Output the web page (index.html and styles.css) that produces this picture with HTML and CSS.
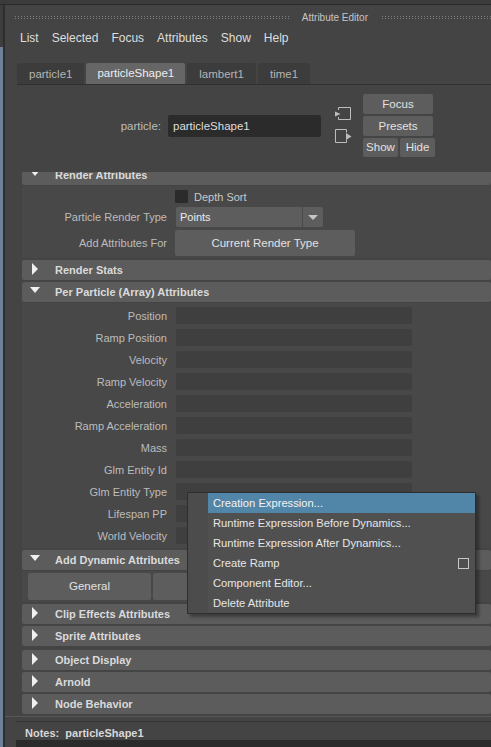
FILE: index.html
```html
<!DOCTYPE html>
<html lang="en">
<head>
    <meta charset="UTF-8">
    <title>Attribute Editor</title>
    <link rel="stylesheet" href="styles.css">
</head>
<body>
    <div class="topbar"></div>
    <div class="window">
        <div class="viewport-edge"></div>
        <div class="editor">
            <div class="titlebar">
                <span class="grip grip-left"></span>
                <span class="title">Attribute Editor</span>
                <span class="grip grip-right"></span>
            </div>
            <div class="menubar">
                <span>List</span>
                <span>Selected</span>
                <span>Focus</span>
                <span>Attributes</span>
                <span>Show</span>
                <span>Help</span>
            </div>
            <div class="tabs">
                <div class="tab">particle1</div>
                <div class="tab active">particleShape1</div>
                <div class="tab">lambert1</div>
                <div class="tab">time1</div>
            </div>

            <div class="node">
                <div class="node-label">particle:</div>
                <div class="node-field">particleShape1</div>
                <div class="node-icons">
                    <svg width="17" height="14" viewBox="0 0 17 14">
                        <path d="M3.5 3V0.5H15.5V12.5H3.5V10" fill="none" stroke="#bdbdbd"/>
                        <path d="M0 4.5L5.5 7L0 9.5Z" fill="#bdbdbd"/>
                    </svg>
                    <svg width="17" height="14" viewBox="0 0 17 14">
                        <path d="M11.5 3.5V0.5H0.5V13.5H11.5V10.5" fill="none" stroke="#bdbdbd"/>
                        <path d="M11 4L16.5 7.5L11 11Z" fill="#bdbdbd"/>
                    </svg>
                </div>
                <div class="node-buttons">
                    <div class="btn wide">Focus</div>
                    <div class="btn wide">Presets</div>
                    <div class="btn-pair">
                        <div class="btn half">Show</div>
                        <div class="btn half">Hide</div>
                    </div>
                </div>
            </div>

            <div class="scroll">
                <div class="scroll-inner">
                    <div class="section-head open"><span class="arrow down"></span>Render Attributes</div>
                    <div class="section-body render-body">
                        <div class="row check-row">
                            <span class="label"></span>
                            <span class="checkbox"></span>
                            <span class="check-text">Depth Sort</span>
                        </div>
                        <div class="row select-row">
                            <span class="label">Particle Render Type</span>
                            <div class="select">
                                <span class="select-value">Points</span>
                                <span class="select-arrow"><span class="caret"></span></span>
                            </div>
                        </div>
                        <div class="row button-row">
                            <span class="label">Add Attributes For</span>
                            <div class="btn render-type">Current Render Type</div>
                        </div>
                    </div>

                    <div class="section-head"><span class="arrow right"></span>Render Stats</div>

                    <div class="section-head open"><span class="arrow down"></span>Per Particle (Array) Attributes</div>
                    <div class="section-body array-body">
                        <div class="row array-row"><span class="label">Position</span><span class="array-field"></span></div>
                        <div class="row array-row"><span class="label">Ramp Position</span><span class="array-field"></span></div>
                        <div class="row array-row"><span class="label">Velocity</span><span class="array-field"></span></div>
                        <div class="row array-row"><span class="label">Ramp Velocity</span><span class="array-field"></span></div>
                        <div class="row array-row"><span class="label">Acceleration</span><span class="array-field"></span></div>
                        <div class="row array-row"><span class="label">Ramp Acceleration</span><span class="array-field"></span></div>
                        <div class="row array-row"><span class="label">Mass</span><span class="array-field"></span></div>
                        <div class="row array-row"><span class="label">Glm Entity Id</span><span class="array-field"></span></div>
                        <div class="row array-row"><span class="label">Glm Entity Type</span><span class="array-field"></span></div>
                        <div class="row array-row"><span class="label">Lifespan PP</span><span class="array-field"></span></div>
                        <div class="row array-row"><span class="label">World Velocity</span><span class="array-field"></span></div>
                    </div>

                    <div class="section-head open"><span class="arrow down"></span>Add Dynamic Attributes</div>
                    <div class="section-body dynamic-body">
                        <div class="btn dyn">General</div>
                        <div class="btn dyn"></div>
                        <div class="btn dyn"></div>
                    </div>

                    <div class="section-head"><span class="arrow right"></span>Clip Effects Attributes</div>
                    <div class="section-head spaced"><span class="arrow right"></span>Sprite Attributes</div>
                    <div class="section-head"><span class="arrow right"></span>Object Display</div>
                    <div class="section-head"><span class="arrow right"></span>Arnold</div>
                    <div class="section-head"><span class="arrow right"></span>Node Behavior</div>
                </div>
            </div>

            <div class="notes">
                <div class="notes-label">Notes:&nbsp; particleShape1</div>
                <div class="notes-field"></div>
            </div>
        </div>
    </div>

    <div class="popup">
        <div class="popup-item hover">Creation Expression...</div>
        <div class="popup-item">Runtime Expression Before Dynamics...</div>
        <div class="popup-item">Runtime Expression After Dynamics...</div>
        <div class="popup-item option">Create Ramp<span class="option-box"></span></div>
        <div class="popup-item">Component Editor...</div>
        <div class="popup-item">Delete Attribute</div>
    </div>
</body>
</html>
```

FILE: styles.css
```css
body {
    margin: 0;
    width: 491px;
    height: 747px;
    overflow: hidden;
    position: relative;
    background: #444;
    font-family: "Liberation Sans", Arial, sans-serif;
    font-size: 11px;
    color: #bdbdbd;
}
.topbar {
    height: 4px;
    background: #3b3b3b;
    border-bottom: 1px solid #2a2a2a;
}
.window {
    display: flex;
    height: 742px;
}
.viewport-edge {
    width: 3px;
    border-right: 2px solid #2e2e2e;
    background: linear-gradient(#3d3d3d 0 42px, #6e8197 42px);
}
.editor {
    flex: 1;
    display: flex;
    flex-direction: column;
    min-width: 0;
}
.editor > * {
    flex-shrink: 0;
}

/* title + menu */
.titlebar {
    height: 25px;
    display: flex;
    align-items: center;
    padding-left: 10px;
}
.grip {
    height: 3px;
    background:
        linear-gradient(transparent 0 1px, #444 1px 2px, transparent 2px),
        repeating-linear-gradient(90deg, #7c7c7c 0 1px, transparent 1px 3px);
}
.grip-left {
    flex: 1;
}
.grip-right {
    width: 109px;
}
.title {
    font-size: 10px;
    color: #c4c4c4;
    margin: 0 14px 0 13px;
}
.menubar {
    height: 16px;
    line-height: 16px;
    display: flex;
    gap: 13px;
    padding-left: 15px;
    margin-bottom: 17px;
    font-size: 12px;
    color: #dedede;
}

/* tabs */
.tabs {
    display: flex;
    gap: 2px;
    height: 21px;
    margin-left: 12px;
    border-bottom: 1px solid #303030;
}
.tab {
    padding: 0 12px;
    line-height: 23px;
    font-size: 11.5px;
    background: #3c3c3c;
    color: #b4b4b4;
    border-radius: 2px 2px 0 0;
}
.tab.active {
    padding: 0 11px;
    background: #666;
    color: #eee;
    line-height: 20px;
}

/* node name area */
.node {
    display: flex;
    align-items: flex-start;
    height: 87px;
    box-sizing: border-box;
    padding-top: 9px;
}
.node-label {
    width: 156px;
    margin-top: 21px;
    line-height: 22px;
    text-align: right;
    font-size: 11.5px;
}
.node-field {
    width: 153px;
    height: 22px;
    box-sizing: border-box;
    margin: 21px 0 0 7px;
    padding-left: 5px;
    line-height: 22px;
    font-size: 11.5px;
    background: #2b2b2b;
    color: #dedede;
    border-radius: 2px;
}
.node-icons {
    display: flex;
    flex-direction: column;
    gap: 8px;
    margin: 13px 0 0 14px;
}
.node-icons svg {
    display: block;
}
.node-buttons {
    display: flex;
    flex-direction: column;
    gap: 2px;
    margin-left: 11px;
}
.btn {
    background: #5d5d5d;
    color: #e2e2e2;
    font-size: 11.5px;
    text-align: center;
    border-radius: 2px;
}
.btn.wide {
    width: 70px;
    height: 20px;
    line-height: 20px;
}
.btn-pair {
    display: flex;
    gap: 2px;
}
.btn.half {
    width: 35px;
    height: 19px;
    line-height: 19px;
}

/* scrolling attribute sections */
.scroll {
    height: 544px;
    overflow: hidden;
    padding-left: 17px;
    border-bottom: 1px solid #575757;
}
.scroll-inner {
    margin-top: -7px;
}
.section-head {
    height: 20px;
    display: flex;
    align-items: center;
    background: #5c5c5c;
    border-radius: 2px;
    font-weight: bold;
    color: #dadada;
    margin-bottom: 2px;
}
.section-head.open {
    margin-bottom: 1px;
}
.section-head.spaced {
    margin-bottom: 4px;
}
.arrow {
    width: 0;
    height: 0;
    margin-right: 15px;
}
.arrow.down {
    margin-left: 8px;
    margin-top: -4px;
    border-left: 5px solid transparent;
    border-right: 5px solid transparent;
    border-top: 6px solid #f0f0f0;
}
.arrow.right {
    margin-left: 10px;
    margin-right: 17px;
    margin-top: -3px;
    border-top: 6px solid transparent;
    border-bottom: 6px solid transparent;
    border-left: 6px solid #f0f0f0;
}
.section-body {
    background: #484848;
    margin-bottom: 2px;
}
.row {
    display: flex;
    align-items: center;
}
.label {
    width: 145px;
    flex-shrink: 0;
    text-align: right;
    color: #bcbcbc;
}
.render-body {
    padding: 4px 0 2px;
}
.check-row {
    height: 13px;
    margin-bottom: 4px;
}
.checkbox {
    width: 13px;
    height: 13px;
    margin-left: 8px;
    background: #2b2b2b;
    border-radius: 1px;
}
.check-text {
    margin-left: 6px;
    color: #c8c8c8;
}
.select-row {
    height: 20px;
    margin-bottom: 3px;
}
.select {
    display: flex;
    width: 147px;
    height: 20px;
    margin-left: 9px;
    background: #5d5d5d;
    border-radius: 2px;
}
.select-value {
    flex: 1;
    padding-left: 4px;
    line-height: 20px;
    color: #ececec;
}
.select-arrow {
    width: 20px;
    border-left: 1px solid #4a4a4a;
    display: flex;
    align-items: center;
    justify-content: center;
}
.caret {
    border-left: 5px solid transparent;
    border-right: 5px solid transparent;
    border-top: 5px solid #c4c4c4;
}
.button-row {
    height: 26px;
}
.btn.render-type {
    width: 180px;
    height: 26px;
    line-height: 26px;
    margin-left: 8px;
}
.array-body {
    padding: 4px 0;
    display: flex;
    flex-direction: column;
    gap: 5px;
}
.array-row {
    height: 17px;
}
.array-field {
    width: 236px;
    height: 17px;
    margin-left: 9px;
    background: #3f3f3f;
    border-radius: 2px;
}
.dynamic-body {
    display: flex;
    gap: 2px;
    padding: 2px 0 2px 6px;
}
.btn.dyn {
    width: 123px;
    height: 27px;
    line-height: 27px;
}

/* notes */
.notes {
    margin: 4px 0 0 11px;
    border-top: 1px solid #353535;
}
.notes-label {
    padding: 4px 0 0 9px;
    line-height: 14px;
    font-weight: bold;
    color: #d8d8d8;
}
.notes-field {
    height: 10px;
    background: #2b2b2b;
}

/* context menu */
.popup {
    position: absolute;
    left: 187px;
    top: 492px;
    width: 289px;
    box-sizing: border-box;
    border: 1px solid #2e2e2e;
    background: #4c4c4c;
    box-shadow: 3px 3px 3px rgba(0, 0, 0, 0.35);
}
.popup-item {
    margin-left: 20px;
    height: 20px;
    line-height: 20px;
    padding-left: 5px;
    background: #505050;
    color: #e6e6e6;
    font-size: 11.2px;
}
.popup-item.hover {
    background: #5286a8;
    color: #f2f2f2;
}
.popup-item.option {
    display: flex;
    align-items: center;
    justify-content: space-between;
}
.option-box {
    width: 9px;
    height: 9px;
    border: 1px solid #c8c8c8;
    margin-right: 6px;
}
```
